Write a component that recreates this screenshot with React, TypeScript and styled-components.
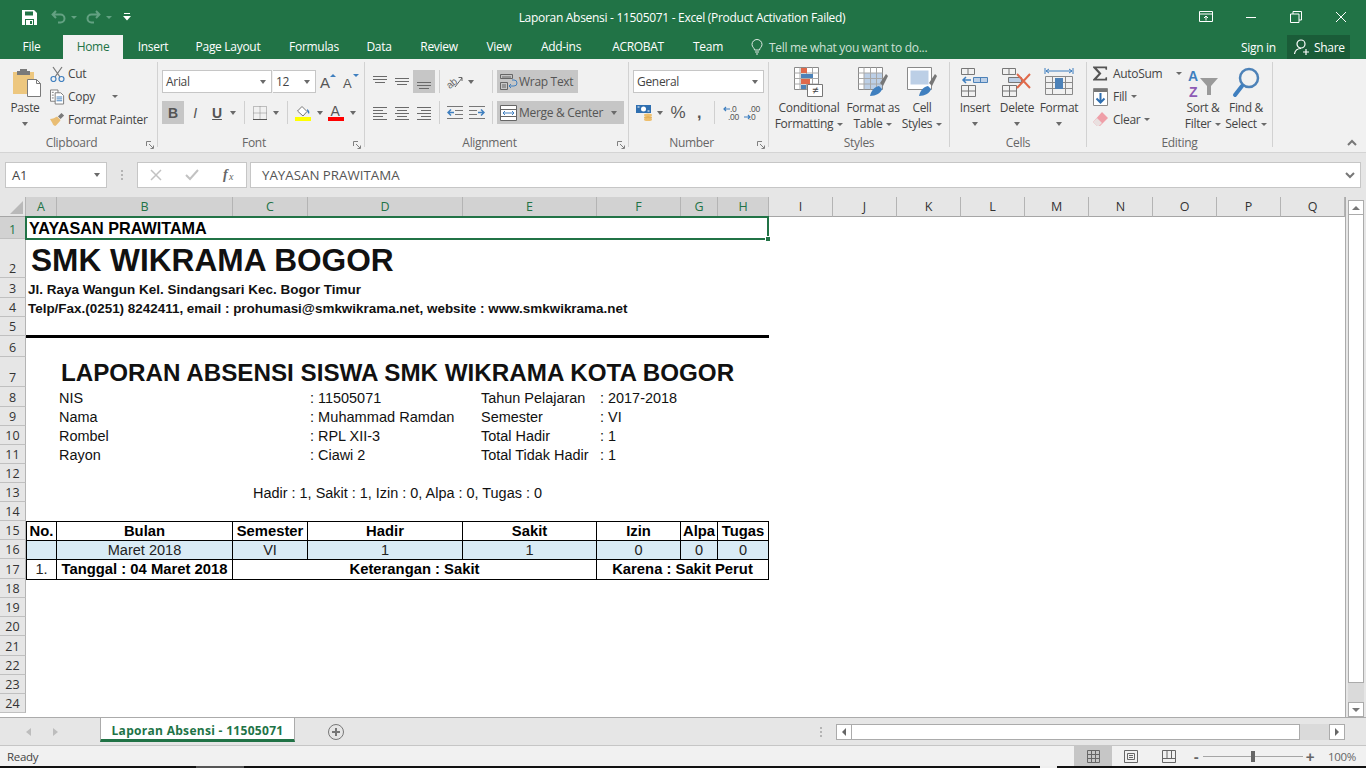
import React from 'react';
import styled, { createGlobalStyle } from 'styled-components';

const UI = `"Open Sans", "Noto Sans", sans-serif`;
const ARIAL = `"Liberation Sans", Arial, sans-serif`;
const GREEN = '#217346';
const TXT = '#444';

const GlobalStyle = createGlobalStyle`
  html, body { margin: 0; padding: 0; background: #e6e6e6; overflow: hidden; }
  * { box-sizing: border-box; }
`;

const Window = styled.div`
  width: 1366px;
  height: 768px;
  display: flex;
  flex-direction: column;
  overflow: hidden;
  font-family: ${UI};
  font-size: 12px;
  letter-spacing: -0.3px;
  color: ${TXT};
`;

/* ---------- title bar ---------- */
const TitleBar = styled.div`
  height: 35px;
  background: ${GREEN};
  display: flex;
  align-items: center;
  color: #fff;
  padding-bottom: 1px;
`;
const Qat = styled.div`
  width: 340px;
  display: flex;
  align-items: center;
  padding-left: 21px;
`;
const QatBtn = styled.span<{ $w: number }>`
  width: ${p => p.$w}px;
  display: flex;
  align-items: center;
  justify-content: center;
`;
const Title = styled.div`
  width: 684px;
  text-align: center;
  font-size: 12px;
  letter-spacing: -0.3px;
`;
const WinBtns = styled.div`
  flex: 1;
  display: flex;
  justify-content: flex-end;
  padding-right: 3px;
`;
const WinBtn = styled.span`
  width: 45px;
  display: flex;
  justify-content: center;
`;

/* ---------- tabs ---------- */
const TabRow = styled.div`
  height: 24px;
  background: ${GREEN};
  display: flex;
  align-items: center;
  color: #fff;
`;
const Tab = styled.div<{ $w: number; $on?: boolean }>`
  width: ${p => p.$w}px;
  height: 24px;
  line-height: 24px;
  text-align: center;
  background: ${p => (p.$on ? '#f1f1f1' : 'transparent')};
  color: ${p => (p.$on ? GREEN : '#fff')};
`;
const TellMe = styled.div`
  display: flex;
  align-items: center;
  gap: 6px;
  width: 502px;
  padding-left: 12px;
  color: #cfe0d6;
`;
const SignIn = styled.div`
  width: 46px;
`;
const Share = styled.div`
  width: 63px;
  height: 24px;
  background: #1a5c38;
  display: flex;
  align-items: center;
  gap: 3px;
  padding-left: 6px;
`;

/* ---------- ribbon ---------- */
const Ribbon = styled.div`
  height: 94px;
  background: #f1f1f1;
  border-bottom: 1px solid #d4d4d4;
  display: flex;
  padding-top: 3px;
`;
const Group = styled.div<{ $w: number }>`
  width: ${p => p.$w}px;
  height: 85px;
  border-right: 1px solid #d2d2d2;
  display: flex;
  flex-direction: column;
`;
const GroupBody = styled.div<{ $row?: boolean; $pad?: number; $top?: number }>`
  height: 73px;
  display: flex;
  flex-direction: ${p => (p.$row ? 'row' : 'column')};
  padding-left: ${p => p.$pad ?? 0}px;
  padding-top: ${p => p.$top ?? 0}px;
  gap: ${p => (p.$top ? 8 : 0)}px;
`;
const GroupFoot = styled.div`
  height: 12px;
  line-height: 16px;
  display: flex;
  color: #666;
`;
const FootLabel = styled.span`
  flex: 1;
  text-align: center;
`;
const Launcher = styled.span`
  width: 14px;
  padding: 2px 0 0 3px;
`;
const ToolRow = styled.div<{ $h?: number }>`
  display: flex;
  align-items: center;
  height: ${p => p.$h ?? 23}px;
`;
const ToolBtn = styled.div<{ $w: number; $on?: boolean }>`
  width: ${p => p.$w}px;
  height: 23px;
  flex: none;
  display: flex;
  align-items: center;
  justify-content: center;
  background: ${p => (p.$on ? '#c6c6c6' : 'transparent')};
`;
const Sep = styled.div<{ $w: number }>`
  width: ${p => p.$w}px;
  height: 23px;
  flex: none;
  display: flex;
  justify-content: center;
  &::before {
    content: '';
    width: 1px;
    height: 100%;
    background: #d0d0d0;
  }
`;
const Caret = styled.span<{ $ml?: number }>`
  display: inline-block;
  width: 0;
  height: 0;
  margin-left: ${p => p.$ml ?? 0}px;
  border-left: 3.5px solid transparent;
  border-right: 3.5px solid transparent;
  border-top: 4px solid #6a6a6a;
  flex: none;
`;
const SmallCaret = styled.span<{ $ml?: number }>`
  display: inline-block;
  width: 0;
  height: 0;
  flex: none;
  margin-left: ${p => p.$ml ?? 4}px;
  vertical-align: 2px;
  border-left: 3px solid transparent;
  border-right: 3px solid transparent;
  border-top: 3px solid #6a6a6a;
`;
const Combo = styled.div<{ $w: number; $joined?: boolean }>`
  width: ${p => p.$w}px;
  height: 23px;
  flex: none;
  background: #fff;
  border: 1px solid #c6c6c6;
  border-left: ${p => (p.$joined ? 'none' : '1px solid #c6c6c6')};
  margin-left: ${p => (p.$joined ? 1 : 0)}px;
  display: flex;
  align-items: center;
  justify-content: space-between;
  padding: 0 5px 0 3px;
`;
const WideBtn = styled.div<{ $w: number }>`
  width: ${p => p.$w}px;
  height: 23px;
  flex: none;
  background: #c6c6c6;
  display: flex;
  align-items: center;
  gap: 1px;
  padding-left: 3px;
  color: #555;
`;
const BigBtn = styled.div<{ $w: number }>`
  width: ${p => p.$w}px;
  flex: none;
  display: flex;
  flex-direction: column;
  align-items: center;
  padding-top: 5px;
  line-height: 16px;
  white-space: nowrap;
`;
const BigIcon = styled.div`
  height: 30px;
  margin-bottom: 3px;
  display: flex;
  justify-content: center;
  align-items: flex-start;
`;
const CaretLine = styled.div`
  height: 16px;
  display: flex;
  align-items: center;
  justify-content: center;
`;
const SideCol = styled.div<{ $w: number; $pad?: number }>`
  width: ${p => p.$w}px;
  flex: none;
  padding-left: ${p => p.$pad ?? 0}px;
`;
const SideItem = styled.div<{ $gap?: number }>`
  height: 23px;
  display: flex;
  align-items: center;
  gap: ${p => p.$gap ?? 5}px;
  white-space: nowrap;
`;
const IconSlot = styled.span<{ $w: number }>`
  width: ${p => p.$w}px;
  flex: none;
  display: flex;
  justify-content: center;
`;
const Collapse = styled.div`
  margin-left: auto;
  margin-right: 9px;
  align-self: flex-end;
  padding-bottom: 2px;
`;
const Glyph = styled.span<{ $b?: boolean; $i?: boolean; $u?: boolean; $size?: number }>`
  font-family: ${ARIAL};
  font-size: ${p => p.$size ?? 14}px;
  font-weight: ${p => (p.$b ? 700 : 400)};
  font-style: ${p => (p.$i ? 'italic' : 'normal')};
  text-decoration: ${p => (p.$u ? 'underline' : 'none')};
  color: #555;
`;

/* ---------- formula bar ---------- */
const FormulaBar = styled.div`
  height: 44px;
  background: #e6e6e6;
  display: flex;
  align-items: flex-start;
  padding: 9px 5px 0;
`;
const NameBox = styled.div`
  width: 102px;
  height: 26px;
  background: #fff;
  border: 1px solid #c6c6c6;
  display: flex;
  align-items: center;
  justify-content: space-between;
  padding: 0 6px;
  font-size: 13px;
`;
const Dots = styled.div`
  width: 30px;
  height: 26px;
  display: flex;
  flex-direction: column;
  align-items: center;
  justify-content: center;
  gap: 2px;
  & i {
    width: 2px;
    height: 2px;
    background: #b4b4b4;
  }
`;
const FxBox = styled.div`
  width: 110px;
  height: 26px;
  background: #fff;
  border: 1px solid #c6c6c6;
  display: flex;
  align-items: center;
  gap: 23px;
  padding-left: 12px;
`;
const FormulaInput = styled.div`
  width: 1111px;
  height: 26px;
  margin-left: 3px;
  background: #fff;
  border: 1px solid #c6c6c6;
  display: flex;
  align-items: center;
  justify-content: space-between;
  padding: 0 5px 0 11px;
  font-size: 13.3px;
  letter-spacing: 0;
  color: #555;
`;

/* ---------- sheet ---------- */
const colWidths = [31, 176, 75, 155, 134, 84, 37, 51, 64, 64, 64, 64, 64, 64, 64, 64, 64];
const rowHeights = [22, 39, 20, 19, 19, 21, 30, 20, 19, 19, 19, 19, 19, 19, 19, 19, 20, 19, 19, 19, 20, 19, 19, 19];
const colNames = 'ABCDEFGHIJKLMNOPQ'.split('');

const SheetWrap = styled.div`
  height: 520px;
  display: flex;
  background: #fff;
`;
const Grid = styled.div`
  width: 1345px;
  height: 520px;
  overflow: hidden;
  display: grid;
  grid-template-columns: 26px ${colWidths.map(w => `${w}px`).join(' ')};
  grid-template-rows: 20px ${rowHeights.map(h => `${h}px`).join(' ')} 4px;
  font-family: ${ARIAL};
  color: #000;
  letter-spacing: 0;
`;
const Corner = styled.div`
  grid-column: 1;
  grid-row: 1;
  background: #e6e6e6;
  border-right: 1px solid #b4b4b4;
  border-bottom: 1px solid #a6a6a6;
  padding: 4px 0 0 10px;
`;
const ColHead = styled.div<{ $c: number; $on: boolean }>`
  grid-column: ${p => p.$c};
  grid-row: 1;
  background: ${p => (p.$on ? '#d2d2d2' : '#e6e6e6')};
  color: ${p => (p.$on ? GREEN : '#333')};
  border-right: 1px solid #b4b4b4;
  border-bottom: 1px solid #a6a6a6;
  font-family: ${UI};
  font-size: 12.5px;
  display: flex;
  align-items: center;
  justify-content: center;
`;
const RowHead = styled.div<{ $r: number; $on: boolean }>`
  grid-column: 1;
  grid-row: ${p => p.$r};
  background: ${p => (p.$on ? '#d2d2d2' : '#e6e6e6')};
  color: ${p => (p.$on ? GREEN : '#333')};
  border-right: 1px solid #b4b4b4;
  border-bottom: 1px solid #c0c0c0;
  font-family: ${UI};
  font-size: 12.5px;
  display: flex;
  align-items: flex-end;
  justify-content: center;
  line-height: 17px;
`;
const Cell = styled.div<{ $c: number; $s?: number; $r: number; $size?: number; $b?: boolean; $pad?: number; $center?: boolean; $lh?: number }>`
  grid-column: ${p => p.$c} / span ${p => p.$s ?? 1};
  grid-row: ${p => p.$r};
  font-size: ${p => p.$size ?? 14.45}px;
  font-weight: ${p => (p.$b ? 700 : 400)};
  padding-left: ${p => p.$pad ?? 2}px;
  text-align: ${p => (p.$center ? 'center' : 'left')};
  white-space: nowrap;
  align-self: end;
  line-height: ${p => p.$lh ?? 18}px;
  color: #111;
`;
const Rule = styled.div`
  grid-column: 2 / span 8;
  grid-row: 6;
  align-self: end;
  height: 3px;
  background: #000;
  margin-bottom: -2px;
  z-index: 1;
`;
const TableCell = styled.div<{ $c: number; $s?: number; $r: number; $b?: boolean; $fill?: boolean; $last?: boolean }>`
  grid-column: ${p => p.$c} / span ${p => p.$s ?? 1};
  grid-row: ${p => p.$r};
  font-size: ${p => (p.$b ? 14.8 : 14.55)}px;
  font-weight: ${p => (p.$b ? 700 : 400)};
  background: ${p => (p.$fill ? '#d9ebf5' : '#fff')};
  border-top: 1px solid #000;
  border-right: 1px solid #000;
  border-bottom: ${p => (p.$last ? '1px solid #000' : 'none')};
  border-left: ${p => (p.$c === 2 ? '1px solid #000' : 'none')};
  margin-bottom: ${p => (p.$last ? -1 : 0)}px;
  z-index: 1;
  color: ${p => (p.$b ? '#000' : '#222')};
  text-align: center;
  white-space: nowrap;
  line-height: 19px;
`;
const Selected = styled.div`
  grid-column: 2 / span 8;
  grid-row: 2;
  margin: -1px 0 -1px -1px;
  border: 2px solid ${GREEN};
  position: relative;
  z-index: 2;
  font-size: 16.2px;
  font-weight: 700;
  color: #000;
  padding-left: 2px;
  line-height: 21px;
  white-space: nowrap;
`;
const Handle = styled.span`
  position: absolute;
  right: -4px;
  bottom: -4px;
  width: 6px;
  height: 6px;
  background: ${GREEN};
  border: 1px solid #fff;
`;

const VScroll = styled.div`
  width: 21px;
  background: #e6e6e6;
  border-left: 1px solid #ababab;
  padding: 3px 2px 0 2px;
  display: flex;
  flex-direction: column;
`;
const ScrollBtn = styled.div`
  height: 15px;
  flex: none;
  width: 16px;
  background: #fff;
  border: 1px solid #ababab;
  display: flex;
  align-items: center;
  justify-content: center;
`;
const VThumb = styled.div`
  flex: none;
  height: 468px;
  width: 16px;
  background: #fff;
  border: 1px solid #ababab;
  border-top: none;
`;
const VTrack = styled.div`
  flex: 1;
  width: 16px;
  background: #dadada;
`;
const ArrowUp = styled.span`
  border-left: 4px solid transparent;
  border-right: 4px solid transparent;
  border-bottom: 4px solid #777;
`;
const ArrowDown = styled.span`
  border-left: 4px solid transparent;
  border-right: 4px solid transparent;
  border-top: 4px solid #777;
`;

/* ---------- sheet tabs ---------- */
const SheetTabs = styled.div`
  height: 29px;
  flex: none;
  background: #e6e6e6;
  border-top: 1px solid #ababab;
  border-bottom: 1px solid #c6c6c6;
  display: flex;
`;
const TabNav = styled.div`
  width: 100px;
  display: flex;
  align-items: center;
  gap: 22px;
  padding: 0 0 0 26px;
`;
const NavArrow = styled.span<{ $left?: boolean }>`
  border-top: 4px solid transparent;
  border-bottom: 4px solid transparent;
  border-right: ${p => (p.$left ? '5px solid #bdbdbd' : 'none')};
  border-left: ${p => (p.$left ? 'none' : '5px solid #bdbdbd')};
`;
const SheetTab = styled.div`
  width: 195px;
  height: 25px;
  margin-top: -1px;
  background: #fff;
  border-left: 1px solid #ababab;
  border-right: 1px solid #ababab;
  border-top: 1px solid #ababab;
  border-bottom: 3px solid ${GREEN};
  color: ${GREEN};
  font-weight: 700;
  text-align: center;
  line-height: 26px;
  letter-spacing: 0.3px;
`;
const AddSheet = styled.div`
  width: 82px;
  display: flex;
  align-items: center;
  justify-content: center;
`;
const SplitDots = styled.div`
  width: 459px;
  height: 27px;
  display: flex;
  flex-direction: column;
  align-items: flex-end;
  justify-content: center;
  gap: 2px;
  padding-right: 14px;
  & i {
    width: 2px;
    height: 2px;
    background: #b4b4b4;
  }
`;
const HScroll = styled.div`
  width: 509px;
  height: 16px;
  margin-top: 6px;
  display: flex;
`;
const HArrowBtn = styled.div`
  width: 16px;
  height: 16px;
  background: #fff;
  border: 1px solid #ababab;
  display: flex;
  align-items: center;
  justify-content: center;
  flex: none;
`;
const HThumb = styled.div`
  width: 448px;
  background: #fff;
  border: 1px solid #ababab;
  border-left: none;
`;
const HTrack = styled.div`
  flex: 1;
  background: #dadada;
`;
const HArrow = styled.span<{ $left?: boolean }>`
  border-top: 4px solid transparent;
  border-bottom: 4px solid transparent;
  border-right: ${p => (p.$left ? '4px solid #666' : 'none')};
  border-left: ${p => (p.$left ? 'none' : '4px solid #666')};
`;

/* ---------- status bar ---------- */
const StatusBar = styled.div`
  height: 20px;
  flex: none;
  background: #f1f1f1;
  display: flex;
  align-items: center;
  padding-left: 7px;
`;
const Ready = styled.div`
  width: 1067px;
  font-size: 11.5px;
`;
const ViewBtn = styled.div<{ $on?: boolean }>`
  width: 38px;
  height: 20px;
  background: ${p => (p.$on ? '#c6c6c6' : 'transparent')};
  display: flex;
  align-items: center;
  justify-content: center;
`;
const Zoomer = styled.div`
  display: flex;
  align-items: center;
  margin-left: 3px;
`;
const Slider = styled.div`
  width: 100px;
  height: 11px;
  margin: 0 2px;
  display: flex;
  justify-content: center;
  background: linear-gradient(#a6a6a6, #a6a6a6) center / 100% 1px no-repeat;
  & i {
    width: 4px;
    height: 11px;
    background: #666;
  }
`;
const ZoomSign = styled.span`
  font-family: ${ARIAL};
  font-weight: 700;
  font-size: 15px;
  line-height: 15px;
  color: #666;
  width: 10px;
  text-align: center;
`;
const Pct = styled.div`
  margin-left: 13px;
  font-size: 11.5px;
  color: #666;
`;
const Taskbar = styled.div`
  height: 2px;
  flex: none;
  background: linear-gradient(90deg, #111 196px, #555 196px, #555 244px, #111 244px, #111 1040px, #eee 1040px, #eee 1057px, #111 1057px);
`;

/* ---------- icons ---------- */
const SaveIcon = () => (
  <svg width="15" height="15" viewBox="0 0 15 15">
    <path fill="#fff" d="M0 0h12l3 3v12H0z" />
    <path fill={GREEN} d="M3 1.500h8v4H3zM3 9h9v6H3z" />
    <path fill="#fff" d="M4 10h7v5H4z" />
    <path fill={GREEN} d="M8 11h2v3H8z" />
  </svg>
);
const UndoIcon = ({ flip }: { flip?: boolean }) => (
  <svg width="16" height="14" viewBox="0 0 16 14">
    <path
      fill="none"
      stroke="#63a182"
      strokeWidth="2"
      transform={flip ? 'translate(16 0) scale(-1 1)' : undefined}
      d="M5 1L1.600 4.500 5 8M2 4.500h7.500a4 4 0 0 1 0 8H7"
    />
  </svg>
);
const TinyCaret = styled.span`
  flex: none;
  border-left: 3px solid transparent;
  border-right: 3px solid transparent;
  border-top: 3px solid #63a182;
`;
const QatMore = () => (
  <svg width="8" height="8" viewBox="0 0 8 8">
    <path fill="#fff" d="M1 0h6v1H1zM0 3h8L4 7.500z" />
  </svg>
);
const DisplayIcon = () => (
  <svg width="14" height="12" viewBox="0 0 14 12" fill="none" stroke="#fff">
    <path d="M.5.5h13v10H.5zM.5 3h13M7 9.500V5M5 7l2-2 2 2" />
  </svg>
);
const MinIcon = () => (
  <svg width="12" height="12" viewBox="0 0 12 12"><path stroke="#fff" d="M1 6.500h10" /></svg>
);
const RestoreIcon = () => (
  <svg width="12" height="12" viewBox="0 0 12 12" fill="none" stroke="#fff">
    <path d="M.5 3h8.500v8.500H.5zM3 3V.5h8.500V9H9" />
  </svg>
);
const CloseIcon = () => (
  <svg width="12" height="12" viewBox="0 0 12 12"><path stroke="#fff" d="M1 1l10 10M11 1L1 11" /></svg>
);
const BulbIcon = () => (
  <svg width="12" height="16" viewBox="0 0 12 16" fill="none" stroke="#dfeae4">
    <path d="M3.500 11c0-2-2.500-3-2.500-5.500a5 5 0 0 1 10 0C11 8 8.500 9 8.500 11zM4 13h4M5 15h2" />
  </svg>
);
const UserIcon = () => (
  <svg width="18" height="18" viewBox="0 0 18 18" fill="none" stroke="#fff" strokeWidth="1.200">
    <circle cx="8" cy="6" r="4" />
    <path d="M1.500 16c.5-3.500 3-5.500 6.500-5.500M13 11v6M10 14h6" />
  </svg>
);
const LauncherIcon = () => (
  <svg width="8" height="8" viewBox="0 0 8 8" fill="none" stroke="#808080">
    <path d="M.5 5V.5H5M3 3l4 4M7.500 4.500v3h-3" />
  </svg>
);
const PasteIcon = () => (
  <svg width="34" height="30" viewBox="-4 0 34 30">
    <path fill="#edc77f" d="M1 5h21v22H1z" />
    <path fill="#7a7a7a" d="M8 2h7v2h3v4H5V4h3z" />
    <path fill="#fff" stroke="#7a7a7a" d="M15.500 12.500h9l4 4v13h-13z" />
    <path fill="none" stroke="#7a7a7a" d="M24.500 12.500v4h4" />
  </svg>
);
const ScissorsIcon = () => (
  <svg width="15" height="16" viewBox="0 0 15 16" fill="none">
    <path stroke="#777" strokeWidth="1.200" d="M3 1l7 10M12 1L5 11" />
    <circle cx="3.500" cy="13" r="2.500" stroke="#3f7fbf" strokeWidth="1.200" />
    <circle cx="11.500" cy="13" r="2.500" stroke="#3f7fbf" strokeWidth="1.200" />
  </svg>
);
const CopyIcon = () => (
  <svg width="16" height="16" viewBox="0 0 16 16" fill="#fff" stroke="#777">
    <path d="M.5.5h8v12h-8z" />
    <path d="M5.500 3.500h6l3 3v9h-9z" />
    <path stroke="#3f7fbf" d="M7 8h6M7 10h6M7 12h6" />
    <path fill="none" stroke="#777" d="M2 3h2M2 6h2M2 9h2" />
  </svg>
);
const BrushIcon = () => (
  <svg width="17" height="15" viewBox="0 0 17 15">
    <path fill="#7a7a7a" d="M9 4l4-4 3 3-4 4z" />
    <path fill="#e9bd73" d="M0 7c3 0 6-2 8-3l4 4c-1 2-4 5-6 7-2-1-3-2-3-3z" />
  </svg>
);
const GrowIcon = ({ up }: { up?: boolean }) => (
  <svg width="18" height="21" viewBox="0 -2 18 21">
    <text x="1" y="15" fontFamily={ARIAL} fontSize={up ? 15 : 13} fill="#555">A</text>
    <path fill="#3f7fbf" d={up ? 'M11 4l3-3 3 3z' : 'M11 1h6l-3 3z'} />
  </svg>
);
const BorderIcon = () => (
  <svg width="14" height="14" viewBox="0 0 14 14" fill="none" stroke="#888" strokeDasharray="1 1">
    <path d="M.5.5h13v13H.5zM7 .5v13M.5 7h13" />
    <path strokeDasharray="none" stroke="#555" d="M0 13.500h14" />
  </svg>
);
const FillIcon = () => (
  <svg width="16" height="16" viewBox="0 0 16 16">
    <path fill="#fff" stroke="#777" d="M2.500 6L7 1.500 12 6.500 8 11z" />
    <path fill="#3f7fbf" d="M12 4c2 1 3 3 2 5-1-1-2-2-2-5z" />
    <path fill="#ffff00" d="M0 12h16v4H0z" />
  </svg>
);
const FontColorIcon = () => (
  <svg width="16" height="20" viewBox="0 -2 16 20">
    <text x="2.500" y="11" fontFamily={ARIAL} fontSize="14" fill="#555">A</text>
    <path fill="#ff0000" d="M0 12h16v4H0z" />
  </svg>
);
const Lines = ({ rows }: { rows: [number, number, number][] }) => (
  <svg width="16" height="16" viewBox="0 0 16 16" stroke="#6a6a6a">
    {rows.map(([y, a, b]) => (
      <path key={y} d={`M${a} ${y}.5H${b}`} />
    ))}
  </svg>
);
const OrientIcon = () => (
  <svg width="24" height="23" viewBox="-3 -3 24 23">
    <text x="0" y="14" fontFamily={ARIAL} fontSize="10" fill="#666" transform="rotate(-40 5 10)">ab</text>
    <path fill="none" stroke="#666" d="M9 14l7-9M12.500 4.500h3.500V8" />
  </svg>
);
const WrapIcon = () => (
  <svg width="18" height="16" viewBox="0 0 18 16" fill="none">
    <path stroke="#666" d="M.5.5h12v4H.5zM.5 8.500h7v7h-7z" />
    <path stroke="#666" d="M2 3h9M2 11h4M2 13h4" />
    <path stroke="#3f7fbf" d="M9 12h5a2.500 2.500 0 0 0 0-6h-2M11 10l-2 2 2 2" />
  </svg>
);
const MergeIcon = () => (
  <svg width="18" height="16" viewBox="0 0 18 16" fill="#fff" stroke="#666">
    <path d="M.5.5h16v15H.5zM.5 4.500h16M.5 11.500h16" />
    <path fill="none" stroke="#3f7fbf" d="M4 8h9M5 6L3 8l2 2M12 6l2 2-2 2" />
  </svg>
);
const IndentIcon = ({ rev }: { rev?: boolean }) => (
  <svg width="16" height="13" viewBox="0 0 16 13">
    <g transform={rev ? 'translate(16 0) scale(-1 1)' : undefined}>
      <path stroke="#777" d="M0 .5h16M8 4.500h8M8 8.500h8M0 12.500h16" />
      <path stroke="#3f7fbf" strokeWidth="1.500" fill="none" d="M1 6.500h6M4 3.500l-3 3 3 3" />
    </g>
  </svg>
);
const MoneyIcon = () => (
  <svg width="17" height="17" viewBox="0 0 17 17">
    <path fill="#2f6fb0" d="M0 1h15v8H0z" />
    <circle cx="7.500" cy="5" r="2.500" fill="#fff" />
    <path fill="#fff" d="M1.500 2.500h2v1h-2zM11.500 6.500h2v1h-2z" />
    <ellipse cx="12" cy="11" rx="4" ry="1.500" fill="#eebf6d" />
    <ellipse cx="12" cy="13.500" rx="4" ry="1.500" fill="#e5b25a" />
    <ellipse cx="12" cy="15.500" rx="4" ry="1.500" fill="#eebf6d" />
  </svg>
);
const DecIcon = ({ more }: { more?: boolean }) => (
  <svg width="17" height="20" viewBox="0 -2 17 20">
    <text x={more ? 5 : 7} y="7" fontFamily={ARIAL} fontSize="8.500" fill="#555">{more ? '.00' : '.0'}</text>
    <text x="5" y="15" fontFamily={ARIAL} fontSize="8.500" fill="#555">{more ? '.0' : '.00'}</text>
    <path fill="none" stroke="#3f7fbf" strokeWidth="1.200" d={more ? 'M0 12h6M4 10l2 2-2 2' : 'M1 4h6M3 2L1 4l2 2'} />
  </svg>
);
const TableGrid = ({ blue }: { blue?: boolean }) => (
  <g>
    <path fill="#fff" stroke="#8a8a8a" d="M.5 .5h24v22H.5z" />
    {blue && <path fill="#bccfe6" d="M6 6h18v16H6z" />}
    <path fill="none" stroke="#a8a8a8" d="M6 .5v22M12.500 .5v22M18.500 .5v22M.5 6h24M.5 11.500h24M.5 17h24" />
  </g>
);
const CondIcon = () => (
  <svg width="30" height="30" viewBox="0 0 30 30">
    <TableGrid />
    <path fill="#e0694a" d="M7 1h6v5H7zM7 12h9v5H7z" />
    <path fill="#4d82b8" d="M7 7h12v4H7zM7 18h5v4H7z" />
    <path fill="#fff" stroke="#777" d="M13.500 17.500h15v12h-15z" />
    <text x="21" y="27" fontFamily={ARIAL} fontSize="11" fill="#444" textAnchor="middle">≠</text>
  </svg>
);
const PaintOver = () => (
  <g>
    <path fill="#777" d="M22 16l6-9 2 2-5 10z" />
    <path fill="#3f7fbf" d="M12 29c1-5 4-9 9-10l3 3c-1 4-6 7-12 7z" />
  </g>
);
const FormatTableIcon = () => (
  <svg width="30" height="30" viewBox="0 0 30 30">
    <TableGrid blue />
    <PaintOver />
  </svg>
);
const CellStyleIcon = () => (
  <svg width="30" height="30" viewBox="0 0 30 30">
    <path fill="#fff" stroke="#8a8a8a" d="M.5 .5h24v22H.5z" />
    <path fill="#bccfe6" d="M3.500 3.500h18v14h-18z" />
    <PaintOver />
  </svg>
);
const InsertIcon = () => (
  <svg width="28" height="30" viewBox="0 0 28 30" fill="none" stroke="#777">
    <path d="M.5 1.500h13v6H.5zM7 1.500v6M.5 18.500h14v11H.5zM7.500 18.500v11M.5 24h14" />
    <path fill="#bccfe6" stroke="#4d82b8" d="M12.500 10.500h14v5h-14zM19.500 10.500v5" />
    <path stroke="#3f7fbf" strokeWidth="1.500" d="M2 13h8M5 10l-3 3 3 3" />
  </svg>
);
const DeleteIcon = () => (
  <svg width="30" height="30" viewBox="0 0 30 30" fill="none" stroke="#777">
    <path d="M.5 1.500h13v6H.5zM7 1.500v6M.5 18.500h14v11H.5zM7.500 18.500v11M.5 24h14" />
    <path fill="#bccfe6" stroke="#777" d="M6.500 10.500h13v5h-13z" />
    <path stroke="#e0694a" strokeWidth="2" d="M15 7l13 14M28 7L15 21" />
  </svg>
);
const FormatIcon = () => (
  <svg width="30" height="30" viewBox="0 0 30 30" fill="none" stroke="#8a8a8a">
    <path stroke="#3f7fbf" d="M1 1v6M29 1v6M2 4h26M5 2L2 4l3 2M25 2l3 2-3 2" />
    <path d="M1.500 9.500h27v18h-27zM1.500 15.500h27M1.500 21.500h27M8.500 9.500v18M21.500 9.500v18" />
    <path fill="#4d82b8" stroke="none" d="M11 11h8v11h-8z" />
  </svg>
);
const SigmaIcon = () => (
  <svg width="16" height="15" viewBox="0 0 16 15">
    <path fill="#555" d="M0 0h15v3.500h-1.500L13 2H4l5 5.500L4 13h9l.5-1.500H15V15H0v-1l6-6.500L0 1z" />
  </svg>
);
const FillDownIcon = () => (
  <svg width="15" height="18" viewBox="0 0 15 18">
    <path fill="#fff" stroke="#888" d="M.5.500h14v17H.5z" />
    <path fill="#777" d="M1 1h13v3H1z" />
    <path fill="none" stroke="#2f6fb0" strokeWidth="2" d="M7.500 5v10M3.500 10.500l4 4 4-4" />
  </svg>
);
const EraserIcon = () => (
  <svg width="15" height="15" viewBox="0 0 15 15">
    <path fill="#ef9fa8" d="M9 0l6 6-8 8H4L0 10z" />
    <path fill="#e9e0e0" d="M0 10l4-4 5 5-3 3H4z" />
  </svg>
);
const SortIcon = () => (
  <svg width="30" height="34" viewBox="0 -2 30 34">
    <text x="0" y="12" fontFamily={ARIAL} fontWeight="700" fontSize="14" fill="#3f7fbf">A</text>
    <text x="1" y="28" fontFamily={ARIAL} fontWeight="700" fontSize="14" fill="#8e5bb5">Z</text>
    <path fill="#9a9a9a" d="M12 9h18l-7 8v9h-4v-9z" />
  </svg>
);
const FindIcon = () => (
  <svg width="28" height="31" viewBox="0 0 28 31" fill="none">
    <circle cx="17" cy="11" r="9" stroke="#4d82b8" strokeWidth="2.500" />
    <path stroke="#3f7fbf" strokeWidth="4" strokeLinecap="round" d="M10 19L3 28" />
  </svg>
);
const FxIcon = () => (
  <svg width="16" height="20" viewBox="0 -3 16 20">
    <text x="1" y="11" fontFamily={`"Liberation Serif", serif`} fontStyle="italic" fontWeight="700" fontSize="14" fill="#666">f</text>
    <text x="7" y="12" fontFamily={`"Liberation Serif", serif`} fontStyle="italic" fontSize="10" fill="#666">x</text>
  </svg>
);
const CancelIcon = () => (
  <svg width="12" height="12" viewBox="0 0 12 12"><path stroke="#c2c2c2" strokeWidth="1.500" d="M1 1l10 10M11 1L1 11" /></svg>
);
const EnterIcon = () => (
  <svg width="14" height="12" viewBox="0 0 14 12"><path fill="none" stroke="#c2c2c2" strokeWidth="2" d="M1 6l4 4 8-9" /></svg>
);
const ChevronIcon = ({ up }: { up?: boolean }) => (
  <svg width="10" height="7" viewBox="0 0 10 7">
    <path fill="none" stroke="#777" strokeWidth="2" d={up ? 'M1 6l4-4 4 4' : 'M1 1l4 4 4-4'} />
  </svg>
);
const PlusCircle = () => (
  <svg width="16" height="16" viewBox="0 0 16 16" fill="none" stroke="#777">
    <circle cx="8" cy="8" r="7.500" />
    <path strokeWidth="2" d="M4 8h8M8 4v8" />
  </svg>
);
const NormalView = () => (
  <svg width="13" height="13" viewBox="0 0 13 13" fill="none" stroke="#666">
    <path d="M.5.500h12v12H.5zM4.500.500v12M8.500.500v12M.5 4.500h12M.5 8.500h12" />
  </svg>
);
const PageView = () => (
  <svg width="14" height="13" viewBox="0 0 14 13" fill="none" stroke="#666">
    <path d="M.5.500h13v12H.5zM3.500 3.500h7v6h-7zM5 5.500h4M5 7.500h4" />
  </svg>
);
const BreakView = () => (
  <svg width="14" height="13" viewBox="0 0 14 13" fill="none" stroke="#666">
    <path d="M.5.500h13v12H.5zM.5 8.500h13M5 .500v8M9.500 .500v8" />
  </svg>
);

const tabs: [string, number][] = [
  ['Insert', 60], ['Page Layout', 90], ['Formulas', 82], ['Data', 48], ['Review', 72],
  ['View', 48], ['Add-ins', 76], ['ACROBAT', 78], ['Team', 62],
];

function App() {
  return (
    <Window>
      <GlobalStyle />
      <TitleBar>
        <Qat>
          <QatBtn $w={16}><SaveIcon /></QatBtn>
          <QatBtn $w={14} />
          <QatBtn $w={16}><UndoIcon /></QatBtn>
          <QatBtn $w={13}><TinyCaret /></QatBtn>
          <QatBtn $w={26}><UndoIcon flip /></QatBtn>
          <QatBtn $w={5}><TinyCaret /></QatBtn>
          <QatBtn $w={32}><QatMore /></QatBtn>
        </Qat>
        <Title>Laporan Absensi - 11505071 - Excel (Product Activation Failed)</Title>
        <WinBtns>
          <WinBtn><DisplayIcon /></WinBtn>
          <WinBtn><MinIcon /></WinBtn>
          <WinBtn><RestoreIcon /></WinBtn>
          <WinBtn><CloseIcon /></WinBtn>
        </WinBtns>
      </TitleBar>

      <TabRow>
        <Tab $w={63}>File</Tab>
        <Tab $w={60} $on>Home</Tab>
        {tabs.map(([name, w]) => (
          <Tab key={name} $w={w}>{name}</Tab>
        ))}
        <TellMe><BulbIcon />Tell me what you want to do...</TellMe>
        <SignIn>Sign in</SignIn>
        <Share><UserIcon />Share</Share>
      </TabRow>

      <Ribbon>
        <Group $w={158}>
          <GroupBody $row>
            <BigBtn $w={50}>
              <BigIcon><PasteIcon /></BigIcon>
              Paste
              <CaretLine><Caret /></CaretLine>
            </BigBtn>
            <SideCol $w={100}>
              <SideItem $gap={3}><IconSlot $w={15}><ScissorsIcon /></IconSlot>Cut</SideItem>
              <SideItem $gap={3}><IconSlot $w={15}><CopyIcon /></IconSlot>Copy<SmallCaret $ml={14} /></SideItem>
              <SideItem $gap={3}><IconSlot $w={15}><BrushIcon /></IconSlot>Format Painter</SideItem>
            </SideCol>
          </GroupBody>
          <GroupFoot><FootLabel>Clipboard</FootLabel><Launcher><LauncherIcon /></Launcher></GroupFoot>
        </Group>

        <Group $w={207}>
          <GroupBody $pad={4} $top={8}>
            <ToolRow>
              <Combo $w={110}>Arial<Caret /></Combo>
              <Combo $w={43} $joined>12<Caret /></Combo>
              <ToolBtn $w={23}><GrowIcon up /></ToolBtn>
              <ToolBtn $w={23}><GrowIcon /></ToolBtn>
            </ToolRow>
            <ToolRow>
              <ToolBtn $w={22} $on><Glyph $b>B</Glyph></ToolBtn>
              <ToolBtn $w={22}><Glyph $i>I</Glyph></ToolBtn>
              <ToolBtn $w={22}><Glyph $b $u>U</Glyph></ToolBtn>
              <ToolBtn $w={10}><Caret /></ToolBtn>
              <Sep $w={12} />
              <ToolBtn $w={20}><BorderIcon /></ToolBtn>
              <ToolBtn $w={12}><Caret /></ToolBtn>
              <Sep $w={10} />
              <ToolBtn $w={22}><FillIcon /></ToolBtn>
              <ToolBtn $w={11}><Caret /></ToolBtn>
              <ToolBtn $w={22}><FontColorIcon /></ToolBtn>
              <ToolBtn $w={12}><Caret /></ToolBtn>
            </ToolRow>
          </GroupBody>
          <GroupFoot><FootLabel>Font</FootLabel><Launcher><LauncherIcon /></Launcher></GroupFoot>
        </Group>

        <Group $w={264}>
          <GroupBody $pad={4} $top={8}>
            <ToolRow>
              <ToolBtn $w={22}><Lines rows={[[2, 1, 15], [5, 1, 15], [8, 3, 13]]} /></ToolBtn>
              <ToolBtn $w={22}><Lines rows={[[4, 1, 15], [7, 1, 15], [10, 3, 13]]} /></ToolBtn>
              <ToolBtn $w={22} $on><Lines rows={[[8, 1, 15], [11, 1, 15], [14, 3, 13]]} /></ToolBtn>
              <Sep $w={8} />
              <ToolBtn $w={24}><OrientIcon /></ToolBtn>
              <ToolBtn $w={8}><Caret /></ToolBtn>
              <ToolBtn $w={12} />
              <Sep $w={10} />
              <WideBtn $w={81}><WrapIcon />Wrap Text</WideBtn>
            </ToolRow>
            <ToolRow>
              <ToolBtn $w={22}><Lines rows={[[2, 1, 15], [5, 1, 11], [8, 1, 15], [11, 1, 11], [14, 1, 15]]} /></ToolBtn>
              <ToolBtn $w={22}><Lines rows={[[2, 1, 15], [5, 3, 13], [8, 1, 15], [11, 3, 13], [14, 1, 15]]} /></ToolBtn>
              <ToolBtn $w={22}><Lines rows={[[2, 1, 15], [5, 5, 15], [8, 1, 15], [11, 5, 15], [14, 1, 15]]} /></ToolBtn>
              <Sep $w={8} />
              <ToolBtn $w={24}><IndentIcon /></ToolBtn>
              <ToolBtn $w={20}><IndentIcon rev /></ToolBtn>
              <Sep $w={10} />
              <WideBtn $w={127}><MergeIcon />Merge &amp; Center<Caret $ml={7} /></WideBtn>
            </ToolRow>
          </GroupBody>
          <GroupFoot><FootLabel>Alignment</FootLabel><Launcher><LauncherIcon /></Launcher></GroupFoot>
        </Group>

        <Group $w={140}>
          <GroupBody $pad={4} $top={8}>
            <ToolRow><Combo $w={131}>General<Caret /></Combo></ToolRow>
            <ToolRow>
              <ToolBtn $w={22}><MoneyIcon /></ToolBtn>
              <ToolBtn $w={10}><Caret /></ToolBtn>
              <ToolBtn $w={26}><Glyph $size={17}>%</Glyph></ToolBtn>
              <ToolBtn $w={16}><Glyph $b $size={16}>,</Glyph></ToolBtn>
              <Sep $w={14} />
              <ToolBtn $w={21}><DecIcon /></ToolBtn>
              <ToolBtn $w={21}><DecIcon more /></ToolBtn>
            </ToolRow>
          </GroupBody>
          <GroupFoot><FootLabel>Number</FootLabel><Launcher><LauncherIcon /></Launcher></GroupFoot>
        </Group>

        <Group $w={181}>
          <GroupBody $row $pad={4}>
            <BigBtn $w={72}>
              <BigIcon><CondIcon /></BigIcon>
              Conditional
              <span>Formatting<SmallCaret /></span>
            </BigBtn>
            <BigBtn $w={56}>
              <BigIcon><FormatTableIcon /></BigIcon>
              Format as
              <span>Table<SmallCaret /></span>
            </BigBtn>
            <BigBtn $w={42}>
              <BigIcon><CellStyleIcon /></BigIcon>
              Cell
              <span>Styles<SmallCaret /></span>
            </BigBtn>
          </GroupBody>
          <GroupFoot><FootLabel>Styles</FootLabel></GroupFoot>
        </Group>

        <Group $w={137}>
          <GroupBody $row $pad={4}>
            <BigBtn $w={42}>
              <BigIcon><InsertIcon /></BigIcon>
              Insert
              <CaretLine><Caret /></CaretLine>
            </BigBtn>
            <BigBtn $w={42}>
              <BigIcon><DeleteIcon /></BigIcon>
              Delete
              <CaretLine><Caret /></CaretLine>
            </BigBtn>
            <BigBtn $w={42}>
              <BigIcon><FormatIcon /></BigIcon>
              Format
              <CaretLine><Caret /></CaretLine>
            </BigBtn>
          </GroupBody>
          <GroupFoot><FootLabel>Cells</FootLabel></GroupFoot>
        </Group>

        <Group $w={186}>
          <GroupBody $row>
            <SideCol $w={94} $pad={6}>
              <SideItem><IconSlot $w={15}><SigmaIcon /></IconSlot>AutoSum<SmallCaret $ml={9} /></SideItem>
              <SideItem><IconSlot $w={15}><FillDownIcon /></IconSlot>Fill<SmallCaret $ml={-1} /></SideItem>
              <SideItem><IconSlot $w={15}><EraserIcon /></IconSlot>Clear<SmallCaret $ml={-1} /></SideItem>
            </SideCol>
            <BigBtn $w={44}>
              <BigIcon><SortIcon /></BigIcon>
              Sort &amp;
              <span>Filter<SmallCaret /></span>
            </BigBtn>
            <BigBtn $w={42}>
              <BigIcon><FindIcon /></BigIcon>
              Find &amp;
              <span>Select<SmallCaret /></span>
            </BigBtn>
          </GroupBody>
          <GroupFoot><FootLabel>Editing</FootLabel></GroupFoot>
        </Group>

        <Collapse><ChevronIcon up /></Collapse>
      </Ribbon>

      <FormulaBar>
        <NameBox>A1<Caret /></NameBox>
        <Dots><i /><i /><i /></Dots>
        <FxBox><CancelIcon /><EnterIcon /><FxIcon /></FxBox>
        <FormulaInput>YAYASAN PRAWITAMA<ChevronIcon /></FormulaInput>
      </FormulaBar>

      <SheetWrap>
        <Grid>
          <Corner>
            <svg width="13" height="13" viewBox="0 0 13 13"><path fill="#b9b9b9" d="M13 0v13H0z" /></svg>
          </Corner>
          {colNames.map((n, i) => (
            <ColHead key={n} $c={i + 2} $on={i < 8}>{n}</ColHead>
          ))}
          {rowHeights.map((_, i) => (
            <RowHead key={i} $r={i + 2} $on={i === 0}>{i + 1}</RowHead>
          ))}

          <Selected>YAYASAN PRAWITAMA<Handle /></Selected>
          <Cell $c={2} $s={8} $r={3} $size={31.65} $b $pad={5} $lh={35}>SMK WIKRAMA BOGOR</Cell>
          <Cell $c={2} $s={8} $r={4} $size={13.47} $b $lh={16}>Jl. Raya Wangun Kel. Sindangsari Kec. Bogor Timur</Cell>
          <Cell $c={2} $s={8} $r={5} $size={13.45} $b $lh={16}>Telp/Fax.(0251) 8242411, email : prohumasi@smkwikrama.net, website : www.smkwikrama.net</Cell>
          <Rule />
          <Cell $c={2} $s={8} $r={8} $size={24.2} $b $center $pad={0} $lh={28}>LAPORAN ABSENSI SISWA SMK WIKRAMA KOTA BOGOR</Cell>

          <Cell $c={3} $r={9}>NIS</Cell>
          <Cell $c={3} $r={10}>Nama</Cell>
          <Cell $c={3} $r={11}>Rombel</Cell>
          <Cell $c={3} $r={12}>Rayon</Cell>
          <Cell $c={5} $r={9}>: 11505071</Cell>
          <Cell $c={5} $r={10} $size={14.6}>: Muhammad Ramdan</Cell>
          <Cell $c={5} $r={11}>: RPL XII-3</Cell>
          <Cell $c={5} $r={12}>: Ciawi 2</Cell>
          <Cell $c={6} $r={9} $pad={18}>Tahun Pelajaran</Cell>
          <Cell $c={6} $r={10} $pad={18}>Semester</Cell>
          <Cell $c={6} $r={11} $pad={18}>Total Hadir</Cell>
          <Cell $c={6} $r={12} $pad={18}>Total Tidak Hadir</Cell>
          <Cell $c={7} $r={9} $pad={3}>: 2017-2018</Cell>
          <Cell $c={7} $r={10} $pad={3}>: VI</Cell>
          <Cell $c={7} $r={11} $pad={3}>: 1</Cell>
          <Cell $c={7} $r={12} $pad={3}>: 1</Cell>

          <Cell $c={2} $s={8} $r={14} $center $pad={0}>Hadir : 1, Sakit : 1, Izin : 0, Alpa : 0, Tugas : 0</Cell>

          {['No.', 'Bulan', 'Semester', 'Hadir', 'Sakit', 'Izin', 'Alpa', 'Tugas'].map((h, i) => (
            <TableCell key={h} $c={i + 2} $r={16} $b>{h}</TableCell>
          ))}
          {['', 'Maret 2018', 'VI', '1', '1', '0', '0', '0'].map((v, i) => (
            <TableCell key={i} $c={i + 2} $r={17} $fill>{v}</TableCell>
          ))}
          <TableCell $c={2} $r={18} $last>1.</TableCell>
          <TableCell $c={3} $r={18} $b $last>Tanggal : 04 Maret 2018</TableCell>
          <TableCell $c={4} $s={3} $r={18} $b $last>Keterangan : Sakit</TableCell>
          <TableCell $c={7} $s={3} $r={18} $b $last>Karena : Sakit Perut</TableCell>
        </Grid>
        <VScroll>
          <ScrollBtn><ArrowUp /></ScrollBtn>
          <VThumb />
          <VTrack />
          <ScrollBtn><ArrowDown /></ScrollBtn>
        </VScroll>
      </SheetWrap>

      <SheetTabs>
        <TabNav><NavArrow $left /><NavArrow /></TabNav>
        <SheetTab>Laporan Absensi - 11505071</SheetTab>
        <AddSheet><PlusCircle /></AddSheet>
        <SplitDots><i /><i /><i /></SplitDots>
        <HScroll>
          <HArrowBtn><HArrow $left /></HArrowBtn>
          <HThumb />
          <HTrack />
          <HArrowBtn><HArrow /></HArrowBtn>
        </HScroll>
      </SheetTabs>

      <StatusBar>
        <Ready>Ready</Ready>
        <ViewBtn $on><NormalView /></ViewBtn>
        <ViewBtn><PageView /></ViewBtn>
        <ViewBtn><BreakView /></ViewBtn>
        <Zoomer>
          <ZoomSign>-</ZoomSign>
          <Slider><i /></Slider>
          <ZoomSign>+</ZoomSign>
          <Pct>100%</Pct>
        </Zoomer>
      </StatusBar>
      <Taskbar />
    </Window>
  );
}

export default App;
